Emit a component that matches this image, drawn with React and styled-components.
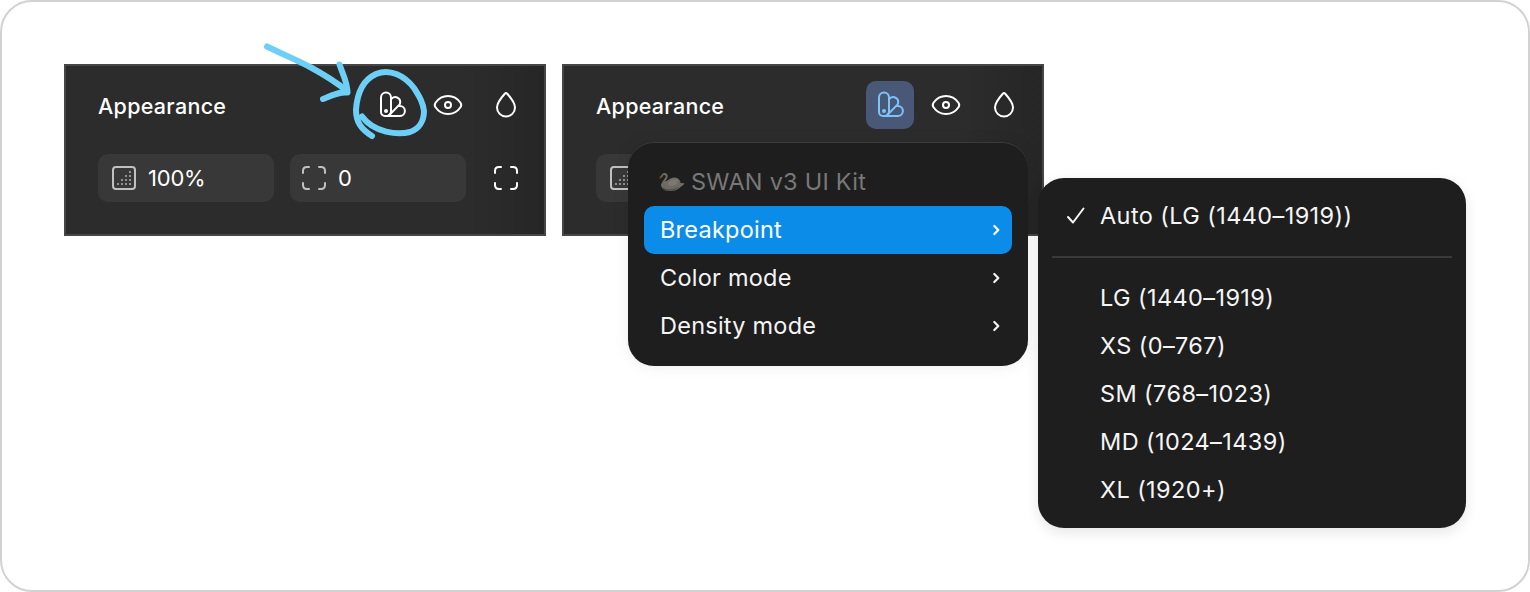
import React from "react";
import styled, { createGlobalStyle } from "styled-components";

const GlobalStyle = createGlobalStyle`
  * {
    box-sizing: border-box;
  }
  body {
    margin: 0;
    background: #fff;
    font-family: Inter, "Liberation Sans", sans-serif;
    color: #fff;
  }
`;

const Frame = styled.main`
  position: relative;
  display: flex;
  align-items: flex-start;
  gap: 16px;
  width: 1530px;
  height: 592px;
  padding: 62px;
  border: 2px solid #d2d2d2;
  border-radius: 32px;
  overflow: hidden;
`;

const PanelWrap = styled.div`
  position: relative;
`;

const Panel = styled.section`
  width: 482px;
  height: 172px;
  padding: 15px 14px 0 32px;
  border: 2px solid #464646;
  background: linear-gradient(90deg, #2c2c2c 84%, #262626);
`;

const PanelHeader = styled.header`
  display: flex;
  align-items: center;
  height: 48px;
`;

const PanelTitle = styled.h2`
  flex: 1;
  margin: 0;
  padding-top: 2px;
  font-size: 21.5px;
  font-weight: 500;
  line-height: 32px;
  letter-spacing: 0.3px;
`;

const IconButton = styled.button`
  display: flex;
  align-items: center;
  justify-content: center;
  width: 48px;
  height: 48px;
  margin-left: ${props => props.$gap || 0}px;
  padding: 0;
  border: none;
  border-radius: 10px;
  color: ${props => (props.$active ? "#7cc4f8" : "#fff")};
  background: ${props => (props.$active ? "#4a5878" : "transparent")};
`;

const FieldRow = styled.div`
  display: flex;
  align-items: center;
  gap: 16px;
  margin-top: 25px;
`;

const Field = styled.div`
  display: flex;
  align-items: center;
  width: 176px;
  height: 48px;
  padding-left: ${props => props.$inset || 0}px;
  border-radius: 10px;
  background: #383838;
  color: #c0c0c0;
`;

const FieldValue = styled.span`
  color: #fff;
  font-size: 22px;
  line-height: 32px;
  letter-spacing: -0.2px;
`;

const MenuBox = styled.div`
  position: absolute;
  top: 78px;
  left: 66px;
  width: 400px;
  height: 224px;
  padding: 16px;
  border-radius: 26px;
  background: #1e1e1e;
  box-shadow: inset 0 1px 0 #3a3a3a, 0 0 16px rgba(0, 0, 0, 0.08);
`;

const SubMenuBox = styled.div`
  position: absolute;
  top: 114px;
  left: 476px;
  width: 428px;
  height: 350px;
  padding: 14px;
  border-radius: 26px;
  background: #1e1e1e;
  box-shadow: 0 6px 14px rgba(0, 0, 0, 0.07), 0 0 16px rgba(0, 0, 0, 0.04);
`;

const MenuItem = styled.div`
  display: flex;
  align-items: center;
  justify-content: space-between;
  height: 48px;
  padding: 0 8px 0 16px;
  border-radius: 10px;
  background: ${props => (props.$active ? "#0c8ce9" : "transparent")};
  color: ${props => (props.$active ? "#fff" : "#f5f5f5")};
  font-size: 23.5px;
  line-height: 32px;
  letter-spacing: 0.24px;
  white-space: nowrap;
`;

const MenuHeading = styled(MenuItem)`
  justify-content: flex-start;
  gap: 6px;
  padding-left: 15px;
  color: #787878;
`;

const Option = styled(MenuItem)`
  justify-content: flex-start;
  padding: 0;
  letter-spacing: 0.4px;
`;

const CheckSlot = styled.span`
  display: flex;
  width: 48px;
  padding-left: 12px;
`;

const Divider = styled.hr`
  height: 2px;
  margin: 16px 0;
  border: none;
  background: #3a3a3a;
`;

const Annotation = styled.svg`
  position: absolute;
  top: 28px;
  left: 248px;
  pointer-events: none;
`;

const Icon = ({ size = 48, width = 2, children }) => (
  <svg
    width={size}
    height={size}
    viewBox={`0 0 ${size} ${size}`}
    fill="none"
    stroke="currentColor"
    strokeWidth={width}
    strokeLinecap="round"
    strokeLinejoin="round"
  >
    {children}
  </svg>
);

const SwatchIcon = () => (
  <Icon>
    <path d="M13 16.500a5 5 0 0 1 10 0v14a5 5 0 0 1-1.500 3.500q-1 1-2.500 1h-2a4 4 0 0 1-4-4z" />
    <path d="M23 18.200l.8-.8a5 5 0 0 1 8.200 5q-.3 1.100-1.200 2L20.500 34.700" />
    <path d="M30.500 25h1.400a5 5 0 0 1 0 10H18" />
    <circle cx="18" cy="30" r="2" fill="currentColor" stroke="none" />
  </Icon>
);

const EyeIcon = () => (
  <Icon>
    <path d="M11.500 26.200q-1.500-2.200 0-4.400C14.500 17.500 19 15 24 15s9.500 2.500 12.500 6.800q1.500 2.200 0 4.400C33.500 30.500 29 33 24 33s-9.500-2.500-12.500-6.800z" />
    <circle cx="24" cy="24" r="3" />
  </Icon>
);

const DropIcon = () => (
  <Icon>
    <path d="M23 12.500q1-1.200 2 0C29.500 17.500 33 22 33 26.500a9 9 0 0 1-18 0c0-4.500 3.500-9 8-14z" />
  </Icon>
);

const CornersIcon = () => (
  <Icon>
    <path d="M13 19v-2q0-4 4-4h2M29 13h2q4 0 4 4v2M35 29v2q0 4-4 4h-2M19 35h-2q-4 0-4-4v-2" />
  </Icon>
);

const OpacityIcon = () => (
  <Icon>
    <rect x="13" y="13" width="22" height="22" rx="3" />
    <path
      d="M29 18h2M25 22h2M29 22h2M21 26h2M25 26h2M29 26h2M17 30h2M21 30h2M25 30h2M29 30h2"
      strokeLinecap="butt"
      opacity="0.65"
    />
  </Icon>
);

const ChevronIcon = () => (
  <Icon size={16} width={2.2}>
    <path d="M6.300 4l4 4-4 4" />
  </Icon>
);

const CheckIcon = () => (
  <Icon size={24}>
    <path d="M4 13L9 18.500 19.500 4.500" />
  </Icon>
);

const SwanIcon = () => (
  <svg width="26" height="20" viewBox="0 0 26 20">
    <path
      d="M2.800 4C4 1 7.500 1.500 7.800 4.300 8 7.200 3.500 9 3.300 12.500"
      fill="none"
      stroke="#6d6b63"
      strokeWidth="2"
      strokeLinecap="round"
    />
    <path
      d="M2.300 12C3.500 9.500 7 9.500 9 8c3-2.500 7-3.500 10-1.500 1.500 1 2.500 3 2.500 4.500l4 .3c-1 2.200-3 3-4.500 4.200-3 3-8 4-12.500 3.300C4.500 18.300 1.500 15.500 2.300 12z"
      fill="#6d6b63"
    />
    <path d="M9 11c3-3.500 7-4.500 10-3 .5 3-3 6-8 6-1.500-.3-2-1.500-2-3z" fill="#7b796f" />
    <path d="M3 15c4 3 11 3.500 17-.5-3 4-9 5-12.500 4C5 18 3.500 16.500 3 15z" fill="#4c4b45" />
    <path d="M3.600 2.600L.8 4.500.5 7l3.200-2z" fill="#74522f" />
  </svg>
);

const options = [
  "LG (1440–1919)",
  "XS (0–767)",
  "SM (768–1023)",
  "MD (1024–1439)",
  "XL (1920+)"
];

// the open menu covers the field values, so they are left out while active
const AppearancePanel = ({ active }) => (
  <Panel>
    <PanelHeader>
      <PanelTitle>Appearance</PanelTitle>
      <IconButton $active={active}>
        <SwatchIcon />
      </IconButton>
      <IconButton $gap={8}>
        <EyeIcon />
      </IconButton>
      <IconButton $gap={10}>
        <DropIcon />
      </IconButton>
    </PanelHeader>
    <FieldRow>
      <Field $inset={2}>
        <OpacityIcon />
        {!active && <FieldValue>100%</FieldValue>}
      </Field>
      <Field>
        <CornersIcon />
        {!active && <FieldValue>0</FieldValue>}
      </Field>
      <IconButton>
        <CornersIcon />
      </IconButton>
    </FieldRow>
  </Panel>
);

const ModeMenu = () => (
  <MenuBox>
    <MenuHeading>
      <SwanIcon />
      SWAN v3 UI Kit
    </MenuHeading>
    {["Breakpoint", "Color mode", "Density mode"].map((label, index) => (
      <MenuItem key={label} $active={index === 0}>
        {label}
        <ChevronIcon />
      </MenuItem>
    ))}
  </MenuBox>
);

const BreakpointMenu = () => (
  <SubMenuBox>
    <Option>
      <CheckSlot>
        <CheckIcon />
      </CheckSlot>
      Auto (LG (1440–1919))
    </Option>
    <Divider />
    {options.map(label => (
      <Option key={label}>
        <CheckSlot />
        {label}
      </Option>
    ))}
  </SubMenuBox>
);

const App = () => (
  <>
    <GlobalStyle />
    <Frame>
      <PanelWrap>
        <AppearancePanel />
      </PanelWrap>
      <PanelWrap>
        <AppearancePanel active />
        <ModeMenu />
        <BreakpointMenu />
      </PanelWrap>
      <Annotation
        width="200"
        height="120"
        fill="none"
        stroke="#6dcff6"
        strokeWidth="6"
        strokeLinecap="round"
        strokeLinejoin="round"
      >
        <path d="M17 16.500C32 24 47 30 60 37c13 7 26 15 37 24" />
        <path d="M89.500 34.500c3 9 8 18 8 28-8-1-16 3-24.500 6.500" />
        <path d="M122 106c-11-7-16-14-16-26 1-16 7-30 20-36 14-6 29 2 38 14 5 8 9 14 10 23 0 10-5 18-14 21-12 3-36 1-48-15.500" />
      </Annotation>
    </Frame>
  </>
);

export default App;
